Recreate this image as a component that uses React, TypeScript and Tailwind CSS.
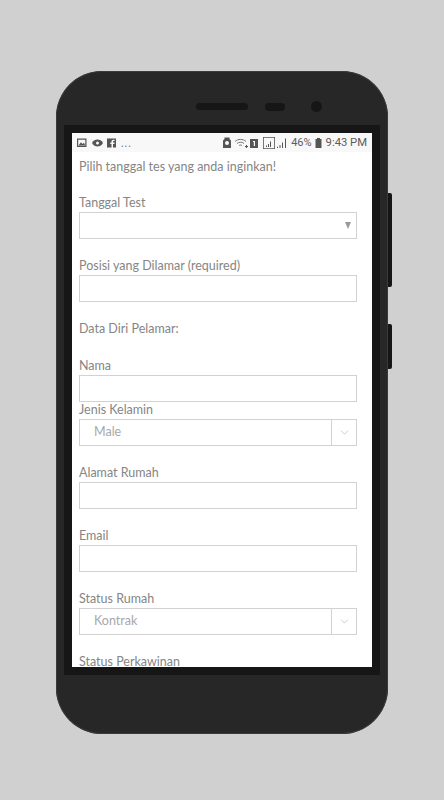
import { ChevronDown } from 'lucide-react';

const textFont = "font-['Lato','Open_Sans',sans-serif]";

function Label({ children, className = '' }: { children: React.ReactNode; className?: string }) {
  return <div className={`h-5 pt-px text-[12.5px] leading-5 text-[#858585] ${className}`}>{children}</div>;
}

function TextField({ label }: { label: string }) {
  return (
    <div className="mb-4">
      <Label>{label}</Label>
      <div className="h-[27px] border border-[#d2d2d2] bg-white" />
    </div>
  );
}

function SelectField({ value }: { value: string }) {
  return (
    <div className="flex h-[27px] items-center border border-[#d2d2d2] bg-white">
      <span className="flex-1 pl-[14px] text-[12.5px] text-[#a8a8a8]">{value}</span>
      <div className="flex h-full w-[25px] items-center justify-center border-l border-[#d2d2d2]">
        <ChevronDown className="h-[13px] w-[13px] text-[#b5b5b5]" strokeWidth={1.25} />
      </div>
    </div>
  );
}

function StatusBar() {
  return (
    <div className="flex h-[19px] items-center bg-[#f8f8f8] pl-[5px] pr-[5px] text-[#555555]">
      {/* notification icons */}
      <svg width="40" height="12" viewBox="0 0 40 12" fill="#555555">
        <path fillRule="evenodd" d="M0 1.500h9.500V10H0zM1.200 2.700v6.100h7.100V2.700z" />
        <path d="M1.500 8.500 4 5.300l1.500 1.700L7 5.800l1.300 2.700z" />
        <path d="M15 6c1.500-2.600 3.400-3.500 5.500-3.500S24.500 3.400 26 6c-1.500 2.600-3.400 3.500-5.500 3.500S16.500 8.600 15 6z" />
        <circle cx="20.500" cy="6" r="1.500" fill="#f8f8f8" />
        <path fillRule="evenodd" d="M30 1.500h9v9h-9zM34.500 10.500H36V7h1.400l.2-1.500H36V4.700c0-.4.200-.6.600-.6h1V2.800h-1.300c-1.200 0-1.800.8-1.800 1.800v.9h-1.200V7h1.200z" />
      </svg>
      <span className={`ml-1 text-[11px] leading-none tracking-[1px] text-[#808080] ${textFont}`}>...</span>
      <div className="flex-1" />
      <svg width="65" height="14" viewBox="0 0 65 14" fill="#555555">
        <path fillRule="evenodd" d="M0 4.500 1.500 3V1.500h5V3L8 4.500V12H0zM4 5a2 2 0 1 0 0 4 2 2 0 0 0 0-4z" />
        <g fill="none" stroke="#666666" strokeWidth="0.9">
          <path d="M12 5.500c3-2.800 8-2.800 11 0" />
          <path d="M14 7.500c2-1.700 5-1.700 7 0" />
          <path d="M16 9.500c.8-.6 2-.6 3 0" />
        </g>
        <path d="M23 9h1v1h1v1h-1v1h-1v-1h-1v-1h1z" />
        <path fillRule="evenodd" d="M27 3h8v9h-8zM30 5v1h.8v4H32V5z" />
        <path fillRule="evenodd" d="M40 1h12v12H40zM40.800 1.800v10.400h10.400V1.800z" />
        <path d="M43 11V9.500h1V11zM45 11V8h1v3zM47 11V5.500h1V11z" />
        <path d="M54 12v-1.200h1V12zM56.500 12V9h1v3zM59 12V6.500h1V12zM62 12V2.500h1V12z" />
      </svg>
      <span className="ml-[3px] font-['Roboto',sans-serif] text-[11px] leading-none text-[#5c5c5c]">46%</span>
      <svg width="7" height="12" viewBox="0 0 7 12" fill="#555555" className="ml-[3px] mr-1">
        <path d="M2 1h3v1h1.500v9H.500V2H2z" />
      </svg>
      <span className="font-['Roboto',sans-serif] text-[11.25px] leading-none text-[#5c5c5c]">9:43 PM</span>
    </div>
  );
}

export default function App() {
  return (
    <div className="h-[800px] w-[444px] overflow-hidden bg-[#d0d0d0] pl-[56px] pt-[71px]">
      {/* Phone body */}
      <div className="relative h-[663px] w-[332px] rounded-[46px] bg-[#272727] shadow-[0_0_0_1px_#3a3a3a_inset]">
        <div className="absolute left-[332px] top-[122px] h-[94px] w-1 rounded-r-[2px] bg-[#161616]" />
        <div className="absolute left-[332px] top-[253px] h-[45px] w-1 rounded-r-[2px] bg-[#161616]" />

        {/* Speaker, sensor, camera */}
        <div className="flex h-[54px] items-center pl-[140px] pt-[17px]">
          <div className="h-[7px] w-[52px] rounded-full bg-[#161616]" />
          <div className="ml-[17px] h-2 w-5 rounded-full bg-[#161616]" />
          <div className="ml-[26px] h-[11px] w-[11px] rounded-full bg-[#161616]" />
        </div>

        {/* Screen bezel */}
        <div className="mx-2 h-[550px] bg-[#161616] p-2">
          <div className="h-[534px] overflow-hidden bg-white">
            <StatusBar />
            <div className={`pl-[7px] pr-[15px] ${textFont}`}>
              <div className="mb-3 h-7 pt-px text-[12.5px] leading-7 text-[#858585]">Pilih tanggal tes yang anda inginkan!</div>

              <div className="mb-4">
                <Label>Tanggal Test</Label>
                <div className="flex h-[27px] items-center justify-end border border-[#d2d2d2] bg-white pr-[5px]">
                  <svg width="6" height="7" viewBox="0 0 6 7" fill="#999999">
                    <path d="M0 0h6L3 7z" />
                  </svg>
                </div>
              </div>

              <TextField label="Posisi yang Dilamar (required)" />

              <Label className="mb-[17px]">Data Diri Pelamar:</Label>

              <Label>Nama</Label>
              <div className="h-[27px] border border-[#d2d2d2] bg-white" />

              <div className="mb-4">
                <div className="h-[17px] pt-px text-[12.5px] leading-[14px] text-[#858585]">Jenis Kelamin</div>
                <SelectField value="Male" />
              </div>

              <TextField label="Alamat Rumah" />
              <TextField label="Email" />

              <div className="mb-4">
                <Label>Status Rumah</Label>
                <SelectField value="Kontrak" />
              </div>

              <Label>Status Perkawinan</Label>
            </div>
          </div>
        </div>
      </div>
    </div>
  );
}
